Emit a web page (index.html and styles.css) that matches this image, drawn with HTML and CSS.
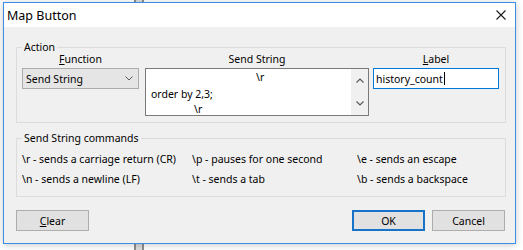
FILE: index.html
```html
<!DOCTYPE html>
<html>
<head>
<meta charset="utf-8">
<title>Map Button</title>
<link rel="stylesheet" href="styles.css">
</head>
<body>
<div class="backdrop-bar"></div>
<div class="window">
  <div class="titlebar">
    <span class="title">Map Button</span>
    <svg class="close" width="10" height="10" viewBox="0 0 10 10"><path d="M0.5 0.5L9.5 9.5M9.5 0.5L0.5 9.5" stroke="#1a1a1a" stroke-width="1.1" fill="none"/></svg>
  </div>
  <div class="client">
    <fieldset class="group action">
      <legend>Action</legend>
      <div class="cols">
        <div class="col col-fn">
          <div class="hdr"><span class="ak">F</span>unction</div>
          <div class="combo">
            <span>Send String</span>
            <svg width="8" height="5" viewBox="0 0 8 5"><path d="M0.5 0.5L4 4L7.5 0.5" stroke="#5a5a5a" stroke-width="1" fill="none"/></svg>
          </div>
        </div>
        <div class="col col-ss">
          <div class="hdr">Send String</div>
          <div class="memo">
            <div class="memo-text">
              <div class="line l1">\r</div>
              <div class="line">order by 2,3;</div>
              <div class="line l3">\r</div>
            </div>
            <div class="vscroll">
              <div class="sbtn"><svg width="8" height="5" viewBox="0 0 8 5"><path d="M0.5 4.5L4 1L7.5 4.5" stroke="#5a5a5a" stroke-width="1.2" fill="none"/></svg></div>
              <div class="sbtn"><svg width="8" height="5" viewBox="0 0 8 5"><path d="M0.5 0.5L4 4L7.5 0.5" stroke="#5a5a5a" stroke-width="1.2" fill="none"/></svg></div>
            </div>
          </div>
        </div>
        <div class="col col-lb">
          <div class="hdr"><span class="ak">L</span>abel</div>
          <div class="edit"><span>history_count</span><span class="caret"></span></div>
        </div>
      </div>
    </fieldset>
    <fieldset class="group cmds">
      <legend>Send String commands</legend>
      <div class="cmd-grid">
        <div>\r - sends a carriage return (CR)</div>
        <div>\p - pauses for one second</div>
        <div>\e - sends an escape</div>
        <div>\n - sends a newline (LF)</div>
        <div>\t - sends a tab</div>
        <div>\b - sends a backspace</div>
      </div>
    </fieldset>
    <div class="buttons">
      <button class="btn"><span class="ak">C</span>lear</button>
      <div class="spacer"></div>
      <button class="btn default">OK</button>
      <button class="btn">Cancel</button>
    </div>
  </div>
</div>
</body>
</html>
```

FILE: styles.css
```css
* { box-sizing: border-box; }
html, body { margin: 0; padding: 0; background: #ffffff; }
body {
  width: 523px;
  height: 250px;
  overflow: hidden;
  position: relative;
  font-family: "Noto Sans", "Open Sans", sans-serif;
  font-size: 10.5px;
  color: #000;
}
.backdrop-bar {
  position: absolute;
  left: 134px;
  top: 0;
  width: 10px;
  height: 250px;
  background: #dcdcdc;
  border-left: 2px solid #8d8d8d;
  border-right: 2px solid #8d8d8d;
}
.window {
  position: relative;
  margin: 2px 0 0 3px;
  width: 513px;
  height: 242px;
  border: 1px solid #3d8ee3;
  background: #f0f0f0;
  box-shadow: 0 1px 7px rgba(0, 0, 0, 0.22);
  display: flex;
  flex-direction: column;
}
.titlebar {
  height: 24px;
  flex: none;
  background: #ffffff;
  display: flex;
  align-items: center;
  justify-content: space-between;
  padding: 0 9px 0 3px;
}
.title { font-size: 12.5px; }
.close { display: block; }
.client { padding: 14px 0 0 12px; }
.group {
  margin: 0;
  width: 490px;
  min-width: 0;
  border: 1px solid #dcdcdc;
  padding: 0 6px 6px 5px;
}
.group legend {
  padding: 0 2px;
  margin: 0;
  line-height: 12px;
}
.cols { display: flex; }
.col-fn { width: 117px; }
.col-ss { width: 224px; margin: 0 4px 0 6px; }
.col-lb { width: 126px; }
.hdr {
  line-height: 12px;
  text-align: center;
  margin-bottom: 3px;
}
.ak { text-decoration: underline; }
.combo {
  height: 21px;
  background: #e5e5e5;
  border: 1px solid #acacac;
  display: flex;
  align-items: center;
  justify-content: space-between;
  padding: 0 5px 0 3px;
}
.combo svg { display: block; }
.memo {
  height: 48px;
  border: 1px solid #7a7a7a;
  background: #ffffff;
  display: flex;
}
.memo-text {
  flex: 1;
  padding: 0 0 0 5px;
  line-height: 17px;
  white-space: nowrap;
}
.l1 { padding-left: 105px; }
.l3 { padding-left: 43px; line-height: 12px; }
.vscroll {
  width: 17px;
  background: #f0f0f0;
  display: flex;
  flex-direction: column;
}
.sbtn {
  flex: 1;
  display: flex;
  align-items: center;
  justify-content: center;
}
.sbtn svg { display: block; }
.edit {
  height: 21px;
  border: 1px solid #0078d7;
  background: #ffffff;
  display: flex;
  align-items: center;
  padding-left: 2px;
}
.caret {
  width: 1px;
  height: 13px;
  background: #000;
  margin-left: 1px;
}
.cmds { margin-top: 9px; padding: 5px 6px 7px 5px; }
.cmd-grid {
  display: grid;
  grid-template-columns: 170px 165px 1fr;
  line-height: 20px;
  white-space: nowrap;
}
.buttons {
  display: flex;
  width: 489px;
  margin-top: 13px;
  gap: 7px;
}
.spacer { flex: 1; }
.btn {
  width: 73px;
  height: 21px;
  padding: 0;
  margin: 0;
  font: inherit;
  color: #000;
  background: #e1e1e1;
  border: 1px solid #adadad;
}
.btn.default { border: 2px solid #1673c8; }
```
